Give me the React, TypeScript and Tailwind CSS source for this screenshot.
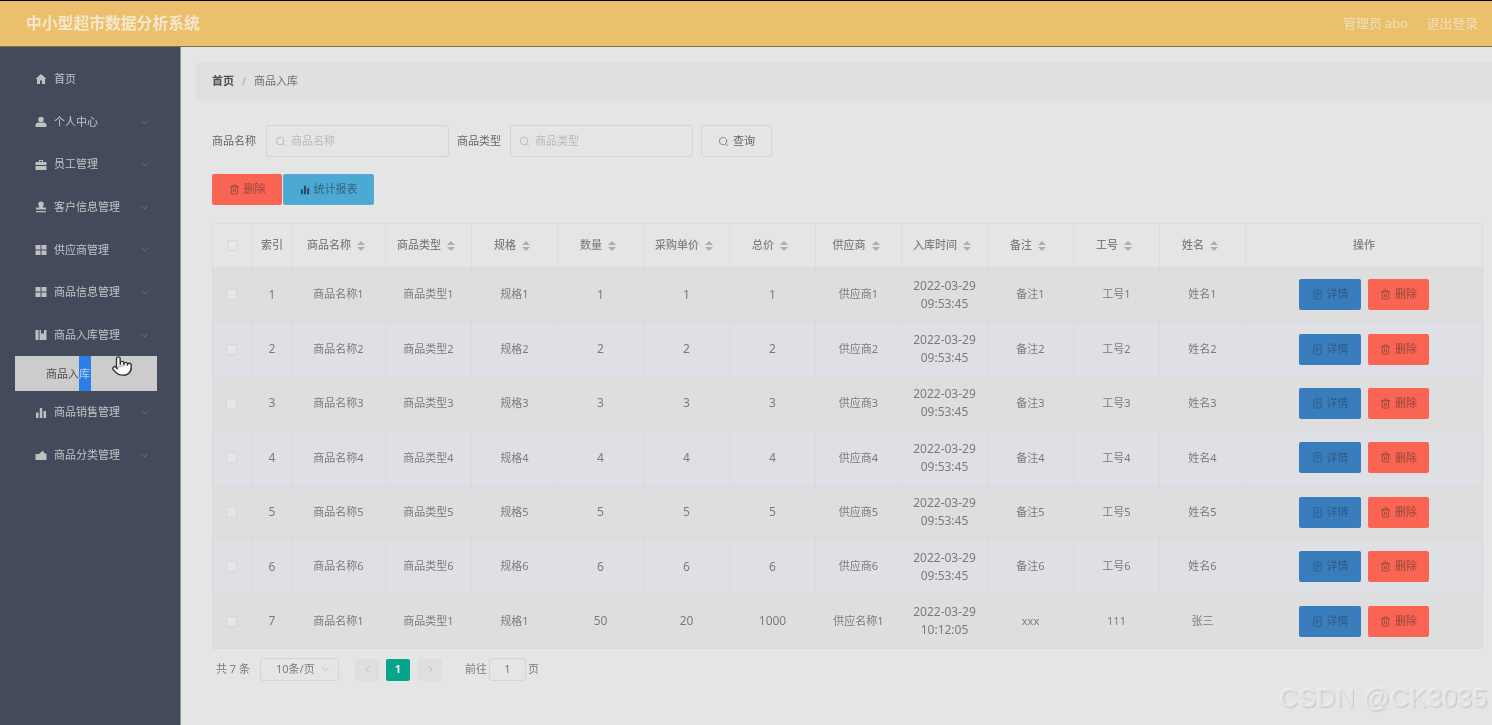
import { ChevronDown, ChevronLeft, ChevronRight, Pointer, Search, Trash2 } from "lucide-react";

type IconProps = { className?: string };

const HomeIcon = ({ className }: IconProps) => (
  <svg viewBox="0 0 24 24" fill="currentColor" className={className}>
    <path d="M12 2 1 12h3v10h6v-7h4v7h6V12h3z" />
  </svg>
);
const UserIcon = ({ className }: IconProps) => (
  <svg viewBox="0 0 24 24" fill="currentColor" className={className}>
    <circle cx="12" cy="7" r="5.5" />
    <path d="M1 22v-4c0-3 3-5 6-5h10c3 0 6 2 6 5v4z" />
  </svg>
);
const CaseIcon = ({ className }: IconProps) => (
  <svg viewBox="0 0 24 24" fill="currentColor" className={className}>
    <path d="M8 2h8v4h6a1 1 0 0 1 1 1v5H1V7a1 1 0 0 1 1-1h6zm2 2v2h4V4zM1 14h22v7a1 1 0 0 1-1 1H2a1 1 0 0 1-1-1z" />
  </svg>
);
const StampIcon = ({ className }: IconProps) => (
  <svg viewBox="0 0 24 24" fill="currentColor" className={className}>
    <path d="M12 1a5.500 5.500 0 0 1 5.500 5.500c0 2.500-2 3.500-2 6.500H21a1 1 0 0 1 1 1v3H2v-3a1 1 0 0 1 1-1h5.500c0-3-2-4-2-6.500A5.500 5.500 0 0 1 12 1zM2 20h20v2.500H2z" />
  </svg>
);
const GridIcon = ({ className }: IconProps) => (
  <svg viewBox="0 0 24 24" fill="currentColor" className={className}>
    <path d="M1 2h10v9H1zM13 2h10v9H13zM1 13h10v9H1zM13 13h10v9H13z" />
  </svg>
);
const StockIcon = ({ className }: IconProps) => (
  <svg viewBox="0 0 24 24" fill="currentColor" className={className}>
    <path d="M1 2h6v20H1zM9 2h3v8l3-2 3 2V2h5v20H9z" />
  </svg>
);
const BarsIcon = ({ className }: IconProps) => (
  <svg viewBox="0 0 24 24" fill="currentColor" className={className}>
    <path d="M2 11h5v11H2zM9.500 2h5v20h-5zM17 8h5v14h-5z" />
  </svg>
);
const GoodsIcon = ({ className }: IconProps) => (
  <svg viewBox="0 0 24 24" fill="currentColor" className={className}>
    <path d="M1 10h7l8-7 3 6h4v13H1z" />
  </svg>
);
const DocIcon = ({ className }: IconProps) => (
  <svg viewBox="0 0 24 24" fill="none" stroke="currentColor" strokeWidth="2" className={className}>
    <rect x="4" y="2" width="16" height="20" rx="1" />
    <path d="M8 8h8M8 12h8M8 16h5" />
  </svg>
);
const SortCaret = () => (
  <svg viewBox="0 0 8 10" className="ml-[6px] mr-[5px] h-[10px] w-[8px] shrink-0 text-[#acaeb5]" fill="currentColor">
    <path d="M4 0 8 4H0zM4 10 0 6h8z" />
  </svg>
);

const menu = [
  { label: "首页", icon: HomeIcon },
  { label: "个人中心", icon: UserIcon, arrow: true },
  { label: "员工管理", icon: CaseIcon, arrow: true },
  { label: "客户信息管理", icon: StampIcon, arrow: true },
  { label: "供应商管理", icon: GridIcon, arrow: true },
  { label: "商品信息管理", icon: GridIcon, arrow: true },
  { label: "商品入库管理", icon: StockIcon, arrow: true, open: true },
  { label: "商品销售管理", icon: BarsIcon, arrow: true },
  { label: "商品分类管理", icon: GoodsIcon, arrow: true },
];

const columns = ["商品名称", "商品类型", "规格", "数量", "采购单价", "总价", "供应商", "入库时间", "备注", "工号", "姓名"];

const rows = [1, 2, 3, 4, 5, 6].map((n) => [
  `商品名称${n}`,
  `商品类型${n}`,
  `规格${n}`,
  `${n}`,
  `${n}`,
  `${n}`,
  `供应商${n}`,
  "2022-03-29 09:53:45",
  `备注${n}`,
  `工号${n}`,
  `姓名${n}`,
]);
rows.push(["商品名称1", "商品类型1", "规格1", "50", "20", "1000", "供应名称1", "2022-03-29 10:12:05", "xxx", "111", "张三"]);

function Sidebar() {
  return (
    <aside className="relative w-[181px] shrink-0 border-r border-[#8d9098] bg-[#434a5b] pt-[11.2px] text-[11px] text-[#c4c4c4]">
      {menu.map((item) => (
        <div key={item.label}>
          <div className="flex h-[42.6px] items-center pl-[35px] pr-[30px]">
            <item.icon className="h-[12px] w-[12px] shrink-0 text-[#c0c0c0]" />
            <span className="ml-[7px] flex-1">{item.label}</span>
            {item.arrow && <ChevronDown className="h-[11px] w-[11px] text-[#7f8694]" strokeWidth={1.5} />}
          </div>
          {item.open && (
            <div className="relative mx-[15px] flex h-[35px] w-[142px] bg-[#cccccc] pl-[31px] text-[#4c4c4c]">
              <span className="self-center">商品入</span>
              <span className="flex w-[12px] items-center bg-[#2a7fe6] text-[#b9d3f0]">库</span>
              <Pointer className="absolute left-[96px] top-[-1px] h-[22px] w-[22px] fill-white text-[#333333]" strokeWidth={1.5} />
            </div>
          )}
        </div>
      ))}
    </aside>
  );
}

function TextInput({ placeholder }: { placeholder: string }) {
  return (
    <div className="flex h-[32px] w-[183px] items-center rounded-[3px] border border-[#d3d4da] pl-[8px] text-[11px] text-[#b8b9bd]">
      <Search className="mr-[5px] h-[11px] w-[11px] text-[#a9abb0]" strokeWidth={1.5} />
      {placeholder}
    </div>
  );
}

function RowButton({ kind }: { kind: "detail" | "delete" }) {
  const detail = kind === "detail";
  return (
    <div
      className={
        detail
          ? "flex h-[31px] w-[62px] items-center justify-center gap-[4px] rounded-[2px] bg-[#3a7dbd] text-[11px] text-[#2d5b87]"
          : "flex h-[31px] w-[61px] items-center justify-center gap-[4px] rounded-[2px] bg-[#f96552] text-[11px] text-[#94483e]"
      }
    >
      {detail ? <DocIcon className="h-[11px] w-[11px]" /> : <Trash2 className="h-[11px] w-[11px]" />}
      {detail ? "详情" : "删除"}
    </div>
  );
}

function Checkbox() {
  return <div className="h-[11px] w-[11px] rounded-[2px] border border-[#d6d7dc] bg-[#e6e6e6]" />;
}

function DataTable() {
  return (
    <table className="w-[1270px] table-fixed border-collapse text-center text-[11px] text-[#7b7b7b]">
      <colgroup>
        <col className="w-[40px]" />
        <col className="w-[39px]" />
        <col className="w-[94px]" />
        {columns.slice(1).map((c) => (
          <col key={c} className="w-[86px]" />
        ))}
        <col className="w-[237px]" />
      </colgroup>
      <thead>
        <tr className="h-[44px] font-medium text-[#808080]">
          <th className="border border-[#dcdde3] font-medium">
            <div className="flex justify-center">
              <Checkbox />
            </div>
          </th>
          <th className="border border-[#dcdde3] font-medium">索引</th>
          {columns.map((c) => (
            <th key={c} className="border border-[#dcdde3] font-medium">
              <div className="flex items-center justify-center">
                {c}
                <SortCaret />
              </div>
            </th>
          ))}
          <th className="border border-[#dcdde3] font-medium">操作</th>
        </tr>
      </thead>
      <tbody>
        {rows.map((row, i) => (
          <tr key={i} className={i % 2 === 0 ? "h-[54.4px] bg-[#dedede]" : "h-[54.4px] bg-[#dfe0e6]"}>
            <td className="border border-[#d9dae0]">
              <div className="flex justify-center pr-[2px]">
                <Checkbox />
              </div>
            </td>
            <td className="border border-[#d9dae0] text-[12px]">{i + 1}</td>
            {row.map((cell, j) => (
              <td key={j} className={`border border-[#d9dae0] ${j === 7 ? "text-[12px] leading-[18px]" : ""} ${j >= 3 && j <= 5 ? "text-[12px]" : ""}`}>
                {j === 7 ? (
                  <>
                    {cell.split(" ")[0]}
                    <br />
                    {cell.split(" ")[1]}
                  </>
                ) : (
                  cell
                )}
              </td>
            ))}
            <td className="border border-[#d9dae0]">
              <div className="flex justify-center gap-[7px]">
                <RowButton kind="detail" />
                <RowButton kind="delete" />
              </div>
            </td>
          </tr>
        ))}
      </tbody>
    </table>
  );
}

function Pagination() {
  return (
    <div className="mt-[10px] flex h-[22px] items-center pl-[4px] text-[11px] text-[#7b7b7b]">
      <span className="w-[33px] whitespace-nowrap">共 7 条</span>
      <div className="ml-[11px] flex h-[23px] w-[79px] items-center justify-between rounded-[3px] border border-[#d3d4da] pl-[15px] pr-[7px]">
        10条/页
        <ChevronDown className="h-[11px] w-[11px] text-[#b0b2b7]" strokeWidth={1.5} />
      </div>
      <div className="ml-[16px] flex h-[22px] w-[24px] items-center justify-center rounded-[2px] bg-[#dfdfdf] text-[#b5b5b5]">
        <ChevronLeft className="h-[11px] w-[11px]" />
      </div>
      <div className="ml-[7px] flex h-[22px] w-[24px] items-center justify-center rounded-[2px] bg-[#04a58c] font-bold text-[#e6e6e6]">1</div>
      <div className="ml-[8px] flex h-[22px] w-[24px] items-center justify-center rounded-[2px] bg-[#dfdfdf] text-[#b5b5b5]">
        <ChevronRight className="h-[11px] w-[11px]" />
      </div>
      <span className="ml-[23px]">前往</span>
      <div className="ml-[2px] flex h-[23px] w-[37px] items-center justify-center rounded-[3px] border border-[#d3d4da]">1</div>
      <span className="ml-[2px]">页</span>
    </div>
  );
}

export default function App() {
  return (
    <div className="relative flex h-[725px] w-[1492px] flex-col overflow-hidden bg-[#e5e5e5] font-['Noto_Sans','Noto_Sans_CJK_SC',sans-serif] blur-[0.35px]">
      <header className="flex h-[47px] shrink-0 items-center justify-between border-t border-b border-t-black border-b-[#7d6f52] bg-[#ebc06c] pl-[26px] pr-[14px]">
        <h1 className="text-[15.8px] font-bold text-[#f4e7cc]">中小型超市数据分析系统</h1>
        <div className="flex gap-[19px] text-[12.8px] text-[#f1dfbd]">
          <span>管理员 abo</span>
          <span>退出登录</span>
        </div>
      </header>
      <div className="flex min-h-0 flex-1">
        <Sidebar />
        <main className="min-w-0 flex-1 pt-[15px]">
          <div className="ml-[15px] flex h-[39px] items-center rounded-l-[3px] bg-[#e0e0e0] pl-[16px] text-[11px]">
            <span className="font-bold text-[#4f4f4f]">首页</span>
            <span className="mx-[8px] text-[#a8a8a8]">/</span>
            <span className="text-[#6e6e6e]">商品入库</span>
          </div>
          <div className="pl-[31px]">
            <div className="mt-[24px] flex items-center text-[11px] text-[#666666]">
              <span>商品名称</span>
              <div className="ml-[10px]">
                <TextInput placeholder="商品名称" />
              </div>
              <span className="ml-[8px]">商品类型</span>
              <div className="ml-[9px]">
                <TextInput placeholder="商品类型" />
              </div>
              <div className="ml-[8px] flex h-[32px] w-[71px] items-center justify-center gap-[4px] rounded-[3px] border border-[#d3d4da] text-[#666666]">
                <Search className="h-[11px] w-[11px]" strokeWidth={1.5} />
                查询
              </div>
            </div>
            <div className="mt-[17px] flex gap-[1px] text-[11px]">
              <div className="flex h-[31px] w-[70px] items-center justify-center gap-[4px] rounded-[2px] bg-[#f96552] text-[#94483e]">
                <Trash2 className="h-[11px] w-[11px]" />
                删除
              </div>
              <div className="flex h-[31px] w-[91px] items-center justify-center gap-[4px] rounded-[2px] border border-[#5aaed3] bg-[#4ba9d3] text-[#33647f]">
                <BarsIcon className="h-[10px] w-[10px] text-[#2c4a5c]" />
                统计报表
              </div>
            </div>
            <div className="mt-[18px]">
              <DataTable />
            </div>
            <Pagination />
          </div>
        </main>
      </div>
      <div className="absolute bottom-[13px] right-[4px] font-['Liberation_Sans',sans-serif] text-[26px] leading-[28px] tracking-[0.6px] text-[#e3e3e3] [text-shadow:1px_1px_1px_#c6c6c6,-1px_-1px_0_#efefef]">
        CSDN @CK3035
      </div>
    </div>
  );
}
